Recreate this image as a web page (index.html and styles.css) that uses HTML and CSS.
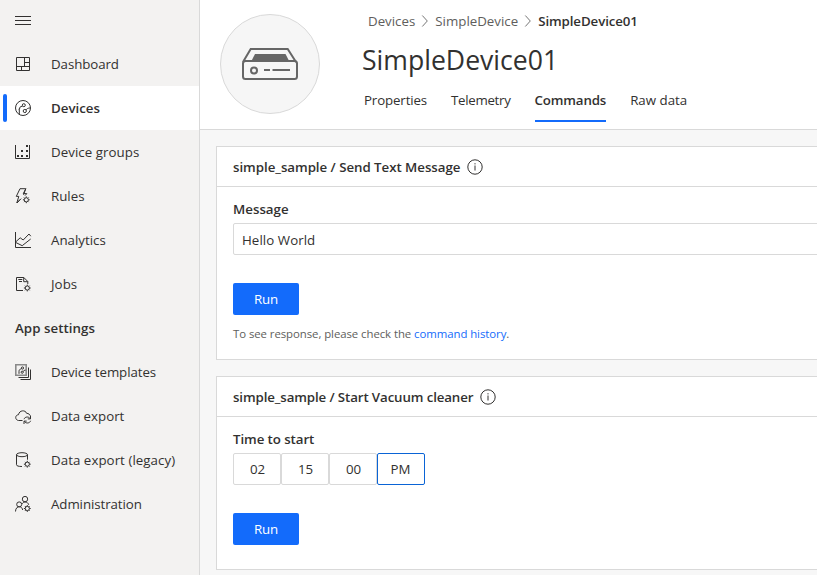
FILE: index.html
```html
<!DOCTYPE html>
<html lang="en">
<head>
<meta charset="utf-8">
<title>SimpleDevice01</title>
<link rel="stylesheet" href="styles.css">
</head>
<body>
<svg width="0" height="0" class="defs">
  <defs>
    <g id="gear"><circle r="2.1"/><path d="M0-3.4v1.2M0 3.4V2.2M-3.4 0h1.2M3.4 0H2.2M-2.3-2.3l.8.8M2.3 2.3l-.8-.8M-2.3 2.3l.8-.8M2.3-2.3l-.8.8"/></g>
  </defs>
</svg>
<div class="app">
  <nav class="sidebar">
    <button class="menu" aria-label="Menu"><svg width="16" height="10" viewBox="0 0 16 10"><path d="M0 .5h16M0 4.5h16M0 8.5h16"/></svg></button>
    <a class="item"><svg viewBox="0 0 16 16"><path d="M1.5 1.5h13v13h-13zM9.5 1.5v9M1.5 10.5h13M9.5 6.5h5M6.5 10.5v4"/></svg><span class="t-dash">Dashboard</span></a>
    <a class="item active"><svg viewBox="0 0 16 16"><circle cx="8" cy="8" r="7.5"/><circle cx="8.8" cy="5.2" r="1.5"/><circle cx="9.8" cy="11" r="1.6"/><path d="M7.4 6.2C5 6.5 4.3 7.6 4.3 9.5v4.6M11 9.9c.8-1.2 2-1.8 4.2-2M5.2 8.4 3.7 9.5"/></svg><span class="t-dev">Devices</span></a>
    <a class="item"><svg viewBox="0 0 16 16"><path d="M.5 1v13.5h14V1"/><path class="solid" d="M2 11h2v2H2zM6 11h2v2H6zM11 11h2v2h-2zM6 6h2v2H6zM11 6h2v2h-2zM11 1h2v2h-2z"/></svg><span class="t-groups">Device groups</span></a>
    <a class="item"><svg viewBox="0 0 16 16"><path d="M8.500 6.800 10.800.700H5L1.300 8.400h2.500L1.800 15l4.400-4.400M10.800.700 8.300 5.600h3.500L10 7.600M5 11.500 2 15"/><use href="#gear" x="11.300" y="11.800"/></svg><span class="t-rules">Rules</span></a>
    <a class="item"><svg viewBox="0 0 16 16"><path d="M.5 0v15.500H16M.8 9.800l4.400-4 3 2.200L14 2l1.800 2.200M.8 10.500l6.400 3.200L15.700 7"/></svg><span class="t-analytics">Analytics</span></a>
    <a class="item"><svg viewBox="0 0 16 16"><path d="M8 14.500H1.500v-13h7.300l4 4V8M8.700 1.500v4.200h4.100M3.300 3.500h4M4 5.500h3"/><use href="#gear" x="12.300" y="12"/></svg><span class="t-jobs">Jobs</span></a>
    <h2 class="group">App settings</h2>
    <a class="item"><svg viewBox="0 0 16 16"><path class="frame" d="M.8.8h10.400v10.400H.8z"/><circle cx="7.500" cy="4" r="1.100"/><circle cx="7.200" cy="8.200" r="1.100"/><path d="M6.400 4.800C4.600 5.200 4 6 4 7.600v2.200M8.200 7.400c.5-.8 1.200-1.200 2.400-1.300M13.500 3.500v10h-10M15.500 5.500v10h-10"/></svg><span class="t-templates">Device templates</span></a>
    <a class="item"><svg viewBox="0 0 16 16"><path d="M7.500 12.500H3.500C-.2 12-.2 7 3.500 6.700 4.200 2 10.500 1.700 11.600 5.300c2.100.1 3.200 1.200 3.800 2.600M9 11.200c.8-2.600 4.700-3 6.200-.6M15.500 8v2.900h-2.700M15.600 12.800c-.8 2.600-4.700 3-6.200.6M9 16v-2.900h2.700"/></svg><span class="t-export">Data export</span></a>
    <a class="item"><svg viewBox="0 0 16 16"><path d="M1.500 2.700v10c0 1.200 2 1.800 5.500 1.800M12.500 2.700v5"/><ellipse cx="7" cy="2.700" rx="5.500" ry="2"/><use href="#gear" x="12.300" y="12.200"/></svg><span class="t-legacy">Data export (legacy)</span></a>
    <a class="item"><svg viewBox="0 0 16 16"><circle cx="10" cy="3.100" r="2.700"/><circle cx="4.200" cy="8.400" r="2.500"/><path d="M.5 15.500c0-6 6.500-6.200 7.200-1.500M7.200 7.800c1-2.300 5.800-2.500 6.500 1"/><use href="#gear" x="12.300" y="12.500"/></svg><span class="t-admin">Administration</span></a>
  </nav>
  <main class="main">
    <header class="header">
      <div class="avatar"><svg width="58" height="34" viewBox="0 0 58 34"><path class="box" d="M2 15 9.700 2h37L55 15"/><rect class="box" x="2" y="14" width="54" height="18" rx="2.500"/><path class="fill" d="M14 7h30.500l3.500 6.800H10.500z"/><circle class="box" cx="13" cy="23.500" r="3"/><path class="box" d="M23 23h6M31.500 23H49"/></svg></div>
      <div class="heading">
        <div class="crumbs"><span class="c-1">Devices</span><svg width="6" height="12" viewBox="0 0 6 12"><path d="M.3.500 5.300 6 .3 11.500"/></svg><span class="c-2">SimpleDevice</span><svg width="6" height="12" viewBox="0 0 6 12"><path d="M.3.500 5.300 6 .3 11.500"/></svg><b class="c-3">SimpleDevice01</b></div>
        <h1><span>SimpleDevice01</span></h1>
        <div class="tabs"><a class="tab-1">Properties</a><a class="tab-2">Telemetry</a><a class="tab-3 current">Commands</a><a class="tab-4">Raw data</a></div>
      </div>
    </header>
    <div class="content">
      <section class="card first">
        <h3><span class="k-1">simple_sample / Send Text Message</span><svg class="info" viewBox="0 0 16 16"><circle cx="8" cy="8" r="7.200"/><path d="M8 6.500v5M8 4.200v1.200"/></svg></h3>
        <div class="body">
          <label><span class="l-1">Message</span></label>
          <div class="input"><span>Hello World</span></div>
          <button class="run"><span>Run</span></button>
          <p><span>To see response, please check the <a>command history</a>.</span></p>
        </div>
      </section>
      <section class="card second">
        <h3><span class="k-2">simple_sample / Start Vacuum cleaner</span><svg class="info" viewBox="0 0 16 16"><circle cx="8" cy="8" r="7.200"/><path d="M8 6.500v5M8 4.200v1.200"/></svg></h3>
        <div class="body">
          <label><span class="l-2">Time to start</span></label>
          <div class="time"><span>02</span><span>15</span><span>00</span><span class="focus">PM</span></div>
          <button class="run"><span>Run</span></button>
        </div>
      </section>
    </div>
  </main>
</div>
</body>
</html>
```
FILE: styles.css
```css
* { box-sizing: border-box; }
body { margin: 0; font: 13.3px/20px "Open Sans", "Noto Sans", sans-serif; color: #323130; overflow: hidden; background: #f7f7f7; }
.defs { position: absolute; }
svg { fill: none; stroke: #323130; flex: none; overflow: visible; }
button { border: 0; padding: 0; font: inherit; }
h1, h2, h3, p { margin: 0; font-size: inherit; }
span, a, b { white-space: nowrap; }
.app { display: flex; height: 575px; }
.sidebar { width: 200px; flex: none; background: #f3f2f1; border-right: 1px solid #d9d9d9; }
.menu { display: flex; height: 42px; padding: 16px 0 0 15px; background: none; width: 100%; }
.item { display: flex; align-items: center; height: 44px; padding-left: 15px; }
.item svg { width: 16px; height: 16px; margin-right: 20px; }
.item .solid { fill: #323130; stroke: none; }
.item .frame { stroke: #8a8a8a; stroke-width: 1.6; }
.active { background: #fff; font-weight: 600; padding-left: 0; }
.active::before { content: ""; width: 4px; height: 28px; border-radius: 2px; background: #136bfb; margin: 0 8px 0 3px; }
.group { height: 44px; line-height: 44px; padding-left: 15px; font-weight: 600; letter-spacing: .05px; }
.t-dash, .t-admin, .t-templates { letter-spacing: -.08px; }
.t-groups, .t-legacy, .t-jobs { letter-spacing: .05px; }
.main { flex: 1; min-width: 0; }
.header { height: 130px; display: flex; background: #fff; border-bottom: 1px solid #d9d9d9; padding: 14px 0 0 20px; }
.avatar { width: 100px; height: 100px; border: 1px solid #d9d9d9; border-radius: 50%; background: #f6f6f6; display: flex; justify-content: center; padding-top: 32px; }
.avatar .box { stroke: #666; stroke-width: 2; }
.avatar .fill { fill: #666; stroke: none; }
.heading { margin-left: 42px; margin-top: -3px; }
.crumbs { display: flex; align-items: center; height: 20px; padding-left: 6px; color: #605e5c; gap: 7px; }
.crumbs svg { stroke: #666; stroke-width: .9; }
.crumbs b { font-weight: 600; color: #323130; letter-spacing: -.1px; }
h1 { font-size: 26.6px; font-weight: 400; line-height: 36px; margin-top: 11px; }
.tabs { display: flex; gap: 24px; margin-top: 12px; padding-left: 2px; }
.tabs a { height: 32px; line-height: 20px; }
.tab-1 { letter-spacing: -.14px; }
.tab-2 { letter-spacing: -.3px; }
.tab-3 { letter-spacing: -.15px; }
.tabs .current { font-weight: 600; border-bottom: 2px solid #136bfb; }
.content { padding: 16px 0 0 16px; width: 640px; }
.card { background: #fff; border: 1px solid #d9d9d9; margin-bottom: 16px; }
.first { height: 214px; }
.second { height: 194px; }
.card h3 { height: 40px; display: flex; align-items: center; font-weight: 600; border-bottom: 1px solid #d9d9d9; padding-left: 16px; }
.k-1 { letter-spacing: -.04px; }
.k-2 { letter-spacing: -.12px; }
.l-2 { letter-spacing: -.08px; }
.info { width: 16px; height: 16px; margin-left: 7px; }
.body { padding: 12px 16px; }
label { display: block; height: 24px; font-weight: 600; }
.input { height: 32px; border: 1px solid #d9d9d9; border-radius: 2px; padding-left: 8px; line-height: 32px; letter-spacing: .06px; }
.run { display: block; width: 66px; height: 32px; border-radius: 2px; background: #136bfb; color: #fff; font-weight: 500; letter-spacing: -.1px; margin-top: 28px; }
p { font-size: 11.4px; line-height: 16px; margin-top: 11px; color: #605e5c; letter-spacing: -.065px; }
p a { color: #136bfb; }
.time { display: flex; }
.time span { width: 48px; height: 32px; border: 1px solid #d9d9d9; border-radius: 2px; line-height: 30px; text-align: center; padding-left: 1px; }
.time .focus { border-color: #0a64d6; padding-right: 2px; }
```
